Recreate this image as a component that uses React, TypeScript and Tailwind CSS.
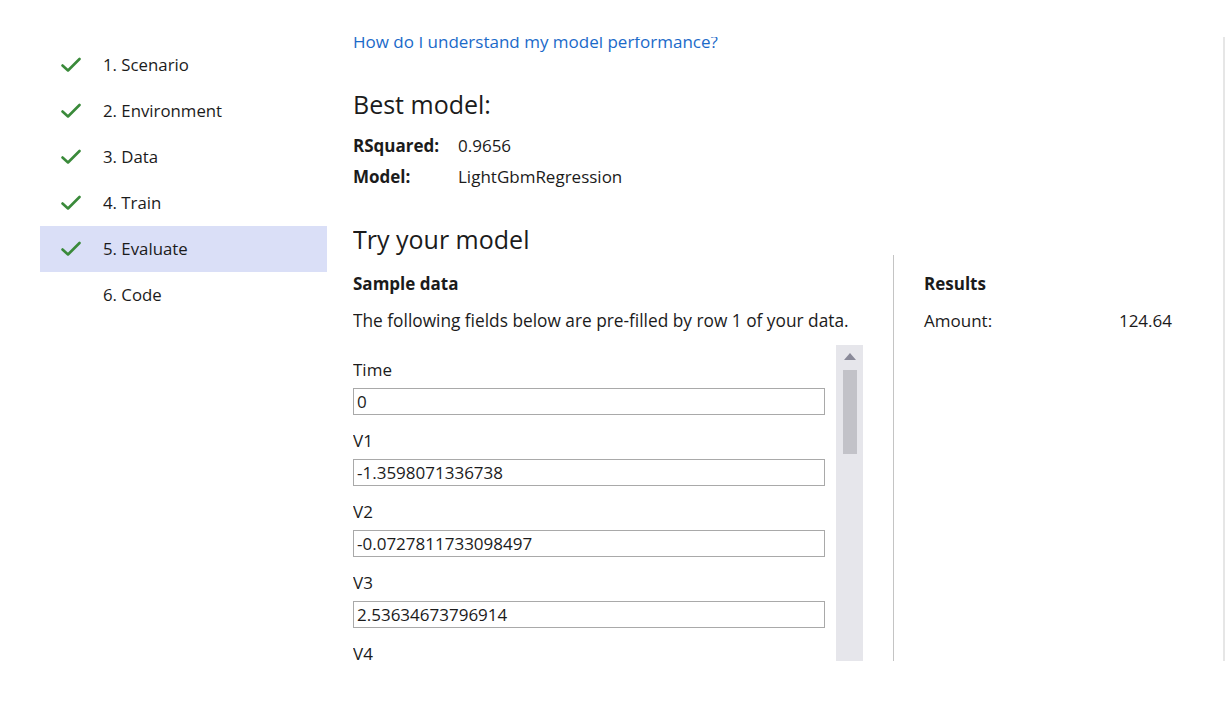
import React from "react";

const steps = [
  { label: "1. Scenario", done: true },
  { label: "2. Environment", done: true },
  { label: "3. Data", done: true },
  { label: "4. Train", done: true },
  { label: "5. Evaluate", done: true, active: true },
  { label: "6. Code", done: false },
];

const fields = [
  { label: "Time", value: "0" },
  { label: "V1", value: "-1.3598071336738" },
  { label: "V2", value: "-0.0727811733098497" },
  { label: "V3", value: "2.53634673796914" },
  { label: "V4", value: "1.37815522427443" },
];

function Check() {
  return (
    <svg width="20" height="16" viewBox="0 0 20 16" fill="none">
      <path d="M1.5 8.5 L7 13.5 L18.5 2" stroke="#3a8a3a" strokeWidth="2.6" strokeLinecap="round" strokeLinejoin="round" />
    </svg>
  );
}

export default function App() {
  return (
    <div
      className="w-[1226px] h-[704px] bg-white overflow-hidden text-[#1b1b1b]"
      style={{ fontFamily: "'Open Sans', 'Noto Sans', sans-serif" }}
    >
      <div className="flex pt-[37px] h-[661px]">
        <nav className="ml-[40px] w-[287px] pt-[5px] shrink-0">
          {steps.map((s) => (
            <div
              key={s.label}
              className={`flex items-center h-[46px] ${s.active ? "bg-[#dadff7]" : ""}`}
            >
              <div className="w-[63px] pl-[21px] flex items-center">{s.done && <Check />}</div>
              <span className="text-[16.8px] leading-[24px]">{s.label}</span>
            </div>
          ))}
        </nav>
        <div className="ml-[26px] w-[872px] h-full border-r-2 border-[#e6e6e6] overflow-hidden flex flex-col">
          <a className="block mt-[-6px] text-[17px] leading-[22px] text-[#1b6ac9]">
            How do I understand my model performance?
          </a>
          <h2 className="mt-[35px] text-[25px] leading-[32px]">Best model:</h2>
          <div className="mt-[10px] flex items-center h-[31px] text-[17px]">
            <span className="w-[105px] font-bold">RSquared:</span>
            <span>0.9656</span>
          </div>
          <div className="flex items-center h-[31px] text-[17px]">
            <span className="w-[105px] font-bold">Model:</span>
            <span>LightGbmRegression</span>
          </div>
          <h2 className="mt-[31px] text-[25px] leading-[32px]">Try your model</h2>
          <div className="flex flex-1 min-h-0">
            <div className="w-[510px] flex flex-col pt-[17px]">
              <div className="text-[17px] leading-[24px] font-bold">Sample data</div>
              <div className="mt-[13px] text-[17.3px] leading-[24px] whitespace-nowrap">
                The following fields below are pre-filled by row 1 of your data.
              </div>
              <div className="mt-[12px] flex flex-1 min-h-0">
                <div className="w-[472px] pt-[13px] overflow-hidden">
                  {fields.map((f) => (
                    <div key={f.label} className="mb-[14px]">
                      <div className="text-[17px] leading-[24px]">{f.label}</div>
                      <input
                        readOnly
                        value={f.value}
                        className="mt-[6px] block w-full h-[27px] border border-[#a9a9a9] px-[3px] text-[17px] outline-none"
                      />
                    </div>
                  ))}
                </div>
                <div className="ml-[11px] w-[27px] bg-[#e6e6eb] flex flex-col items-center pt-[8px]">
                  <div className="w-0 h-0 border-l-[6px] border-r-[6px] border-b-[7px] border-l-transparent border-r-transparent border-b-[#8a8a99]" />
                  <div className="mt-[10px] w-[14px] h-[84px] bg-[#c2c2c8]" />
                </div>
              </div>
            </div>
            <div className="ml-[30px] border-l border-[#c4c4c4] pl-[30px] pt-[17px] flex flex-col">
              <div className="text-[17px] leading-[24px] font-bold">Results</div>
              <div className="mt-[13px] w-[248px] flex justify-between text-[17px] leading-[24px]">
                <span>Amount:</span>
                <span>124.64</span>
              </div>
            </div>
          </div>
        </div>
      </div>
    </div>
  );
}
